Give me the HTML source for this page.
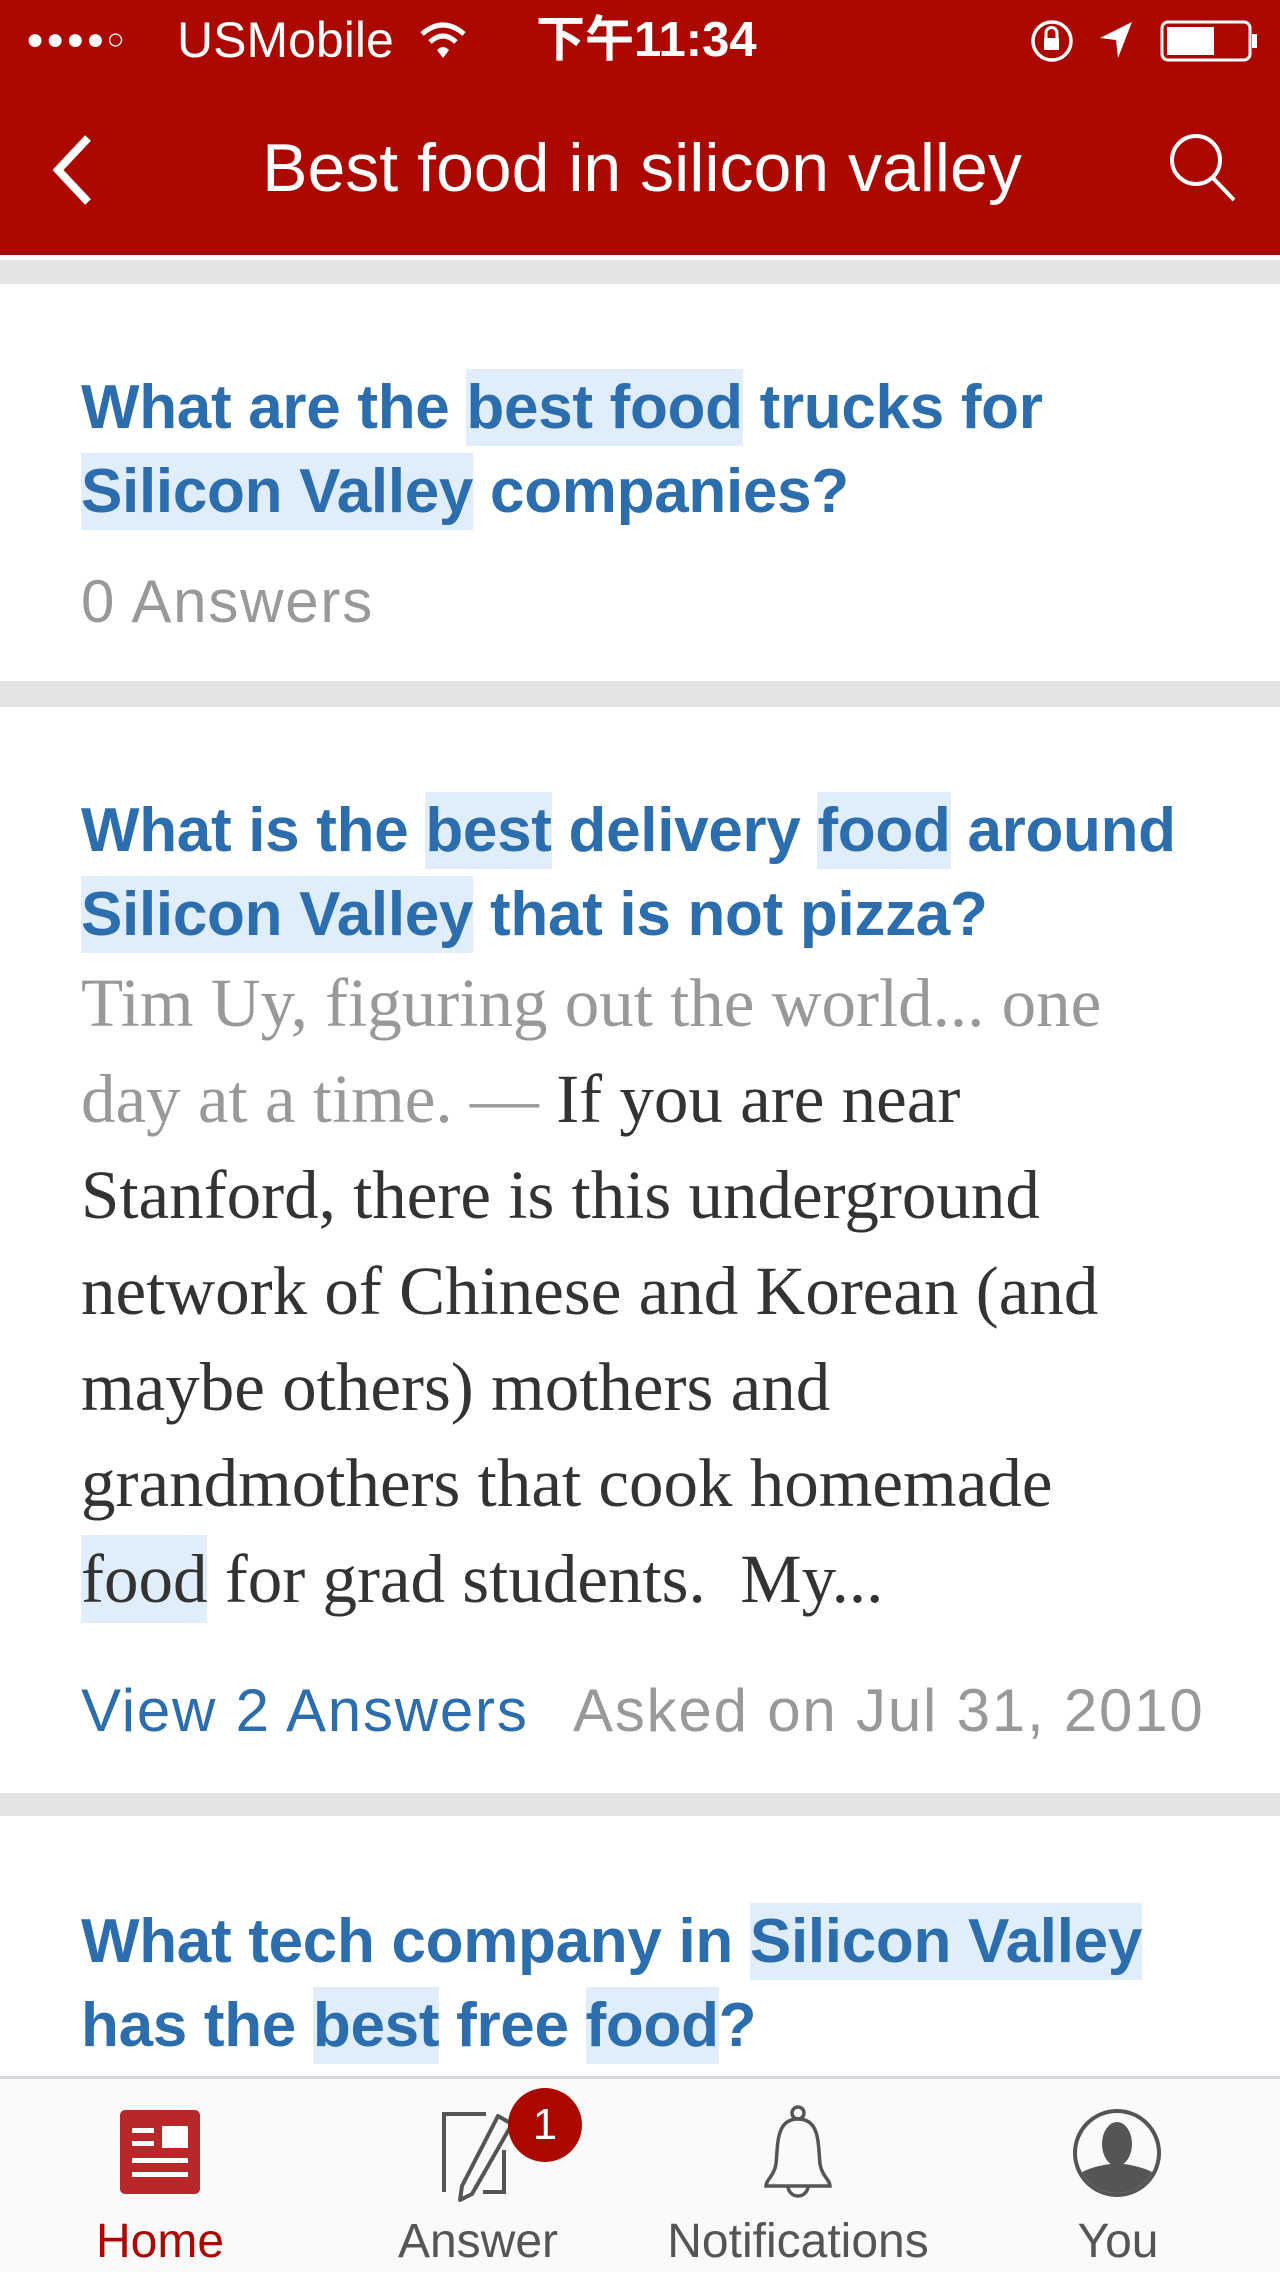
<!DOCTYPE html>
<html><head><meta charset="utf-8"><style>
*{margin:0;padding:0;box-sizing:border-box}
body{width:1280px;height:2272px;overflow:hidden;background:#fff;font-family:"Liberation Sans","Noto Sans CJK SC",sans-serif;position:relative}
.hdr{position:absolute;left:0;top:0;width:1280px;height:255px;background:#ab0800;color:#fff}
.sb{position:absolute;top:12px;height:56px;font-size:50px;line-height:56px;white-space:nowrap}
.title{position:absolute;left:0;width:1280px;top:126px;text-align:center;font-size:68px;line-height:84px;padding-left:4px}
.band{position:absolute;left:0;width:1280px;background:#e4e4e4}
.q{position:absolute;left:81px;width:1180px;font-weight:bold;color:#2b6dad;font-size:62px;line-height:84px;letter-spacing:-0.3px;white-space:nowrap}
.h{background:#e0eefb;padding:4px 0}
.meta{position:absolute;left:81px;font-size:60px;color:#999;letter-spacing:1.8px;line-height:64px;white-space:nowrap}
.body{position:absolute;left:81px;width:1180px;top:955px;font-family:"Liberation Serif",serif;font-size:69px;line-height:96px;color:#333;white-space:nowrap}
.g{color:#999}
.tab{position:absolute;top:2076px;left:0;width:1280px;height:196px;background:#fafafa;border-top:3px solid #d4d8dc}
.lbl{position:absolute;top:2214px;width:320px;text-align:center;font-size:48px;color:#555}
</style></head><body>
<div class="hdr">
 <div class="sb" style="left:26px;font-size:30px;letter-spacing:2px">●●●●○</div>
 <div class="sb" style="left:177px">USMobile</div>
 <svg style="position:absolute;left:418px;top:20px" width="50" height="42" viewBox="0 0 50 42"><path d="M4 14 Q25 -4 46 14" stroke="#fff" stroke-width="5" fill="none"/><path d="M12 22 Q25 10 38 22" stroke="#fff" stroke-width="5" fill="none"/><path d="M19 30 Q25 24 31 30 L25 38 Z" fill="#fff"/></svg>
 <div class="sb" style="left:536px;font-weight:bold;font-size:49px">下午11:34</div>
 <svg style="position:absolute;left:1028px;top:18px" width="52" height="46" viewBox="0 0 52 46"><circle cx="24" cy="23" r="19" stroke="#fff" stroke-width="3.5" fill="none"/><rect x="16" y="20" width="15" height="12" fill="#fff"/><path d="M18 20 v-5 a5.5 5.5 0 0 1 11 0 v5" stroke="#fff" stroke-width="3" fill="none"/></svg>
 <svg style="position:absolute;left:1098px;top:20px" width="36" height="40" viewBox="0 0 36 40"><path d="M34 2 L2 18 L18 20 L20 38 Z" fill="#fff"/></svg>
 <svg style="position:absolute;left:1160px;top:20px" width="100" height="42" viewBox="0 0 100 42"><rect x="2" y="2" width="88" height="38" rx="6" stroke="#fff" stroke-width="3" fill="none"/><rect x="7" y="7" width="47" height="28" fill="#fff"/><rect x="92" y="14" width="5" height="14" fill="#fff"/></svg>
 <svg style="position:absolute;left:48px;top:134px" width="48" height="72" viewBox="0 0 48 72"><path d="M40 4 L10 36 L40 68" stroke="#fff" stroke-width="8" fill="none"/></svg>
 <div class="title">Best food in silicon valley</div>
 <svg style="position:absolute;left:1166px;top:130px" width="74" height="74" viewBox="0 0 74 74"><circle cx="30" cy="30" r="24" stroke="#fff" stroke-width="4" fill="none"/><path d="M47 48 L68 70" stroke="#fff" stroke-width="4"/></svg>
</div>
<div class="band" style="top:260px;height:24px"></div>
<div class="q" style="top:366px">What are the <span class="h">best food</span> trucks for<br><span class="h">Silicon Valley</span> companies?</div>
<div class="meta" style="top:570px">0 Answers</div>
<div class="band" style="top:681px;height:26px"></div>
<div class="q" style="top:789px">What is the <span class="h">best</span> delivery <span class="h">food</span> around<br><span class="h">Silicon Valley</span> that is not pizza?</div>
<div class="body"><span class="g">Tim Uy, figuring out the world... one<br>day at a time. — </span>If you are near<br>Stanford, there is this underground<br>network of Chinese and Korean (and<br>maybe others) mothers and<br>grandmothers that cook homemade<br><span class="h" style="padding:6px 0">food</span> for grad students.&nbsp; My...</div>
<div class="meta" style="top:1679px;color:#2b6dad">View 2 Answers</div>
<div class="meta" style="top:1679px;left:573px">Asked on Jul 31, 2010</div>
<div class="band" style="top:1793px;height:23px"></div>
<div class="q" style="top:1900px">What tech company in <span class="h">Silicon Valley</span><br>has the <span class="h">best</span> free <span class="h">food</span>?</div>
<div class="tab"></div>
<svg style="position:absolute;left:118px;top:2108px" width="86" height="90" viewBox="0 0 86 90"><rect x="2" y="2" width="80" height="84" rx="5" fill="#b82828"/><g fill="#fff"><rect x="14" y="20" width="22" height="5"/><rect x="14" y="33" width="22" height="5"/><rect x="44" y="18" width="26" height="22"/><rect x="14" y="50" width="56" height="5"/><rect x="14" y="64" width="56" height="5"/></g></svg>
<svg style="position:absolute;left:436px;top:2110px" width="120" height="96" viewBox="0 0 120 96"><path d="M50 4 H8 V82 M47 82 H68 V40" stroke="#555" stroke-width="4" fill="none"/><path d="M62 6 L76 14 L36 84 L24 90 L26 76 Z" stroke="#555" stroke-width="4" fill="none" stroke-linejoin="round"/></svg>
<div style="position:absolute;left:508px;top:2088px;width:74px;height:74px;border-radius:50%;background:#ab0800;color:#fff;font-size:44px;text-align:center;line-height:74px">1</div>
<svg style="position:absolute;left:756px;top:2104px" width="84" height="100" viewBox="0 0 84 100"><circle cx="42" cy="9" r="6" stroke="#555" stroke-width="3.5" fill="none"/><path d="M42 15 C20 15 22 40 20 60 C18 72 10 76 10 82 H74 C74 76 66 72 64 60 C62 40 64 15 42 15 Z" stroke="#555" stroke-width="3.5" fill="none"/><path d="M32 82 A10 10 0 0 0 52 82" stroke="#555" stroke-width="3.5" fill="none"/></svg>
<svg style="position:absolute;left:1072px;top:2108px" width="90" height="90" viewBox="0 0 90 90"><defs><clipPath id="c"><circle cx="45" cy="45" r="40"/></clipPath></defs><circle cx="45" cy="45" r="42" stroke="#555" stroke-width="4" fill="none"/><g clip-path="url(#c)" fill="#555"><ellipse cx="45" cy="36" rx="15" ry="22"/><path d="M0 90 V72 Q10 60 38 56 H52 Q80 60 90 72 V90 Z"/></g></svg>
<div class="lbl" style="left:0px;color:#ab0800">Home</div>
<div class="lbl" style="left:318px">Answer</div>
<div class="lbl" style="left:638px">Notifications</div>
<div class="lbl" style="left:958px">You</div>
</body></html>
